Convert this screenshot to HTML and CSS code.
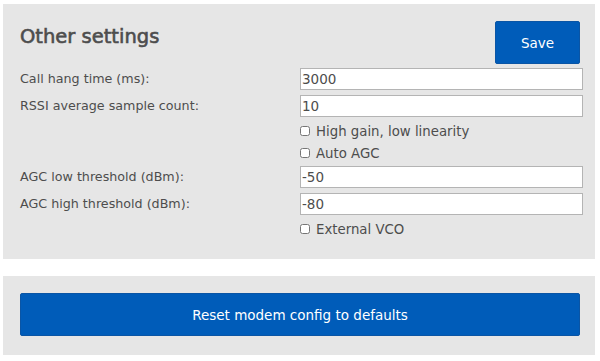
FILE: index.html
```html
<!DOCTYPE html>
<html lang="en">
<head>
    <meta charset="UTF-8">
    <meta name="viewport" content="width=device-width, initial-scale=1.0">
    <title>Other settings</title>
    <link rel="stylesheet" href="styles.css">
</head>
<body>

    <!-- Other settings panel -->
    <div class="panel">
        <div class="panel-head">
            <h2>Other settings</h2>
            <button class="btn save-btn">Save</button>
        </div>

        <div class="settings">
            <label class="field-label" for="hang">Call hang time (ms):</label>
            <input class="field" type="text" id="hang" value="3000">

            <label class="field-label" for="rssi">RSSI average sample count:</label>
            <input class="field" type="text" id="rssi" value="10">

            <span></span>
            <label class="check"><input type="checkbox"> High gain, low linearity</label>

            <span></span>
            <label class="check"><input type="checkbox"> Auto AGC</label>

            <label class="field-label" for="agclow">AGC low threshold (dBm):</label>
            <input class="field" type="text" id="agclow" value="-50">

            <label class="field-label" for="agchigh">AGC high threshold (dBm):</label>
            <input class="field" type="text" id="agchigh" value="-80">

            <span></span>
            <label class="check"><input type="checkbox"> External VCO</label>
        </div>
    </div>

    <!-- Reset panel -->
    <div class="panel reset-panel">
        <button class="btn reset-btn">Reset modem config to defaults</button>
    </div>

</body>
</html>
```

FILE: styles.css
```css
body {
    margin: 0;
    padding: 4px 5px 0 3px;
    font-family: "DejaVu Sans", Verdana, sans-serif;
    font-size: 12.7px;
    color: #4d4d4d;
    background-color: #ffffff;
}

.panel {
    background-color: #e6e6e6;
    padding: 17px 12px 22px 17px;
}

.panel-head {
    display: flex;
    justify-content: space-between;
    align-items: flex-start;
}

.panel-head h2 {
    margin: 4px 0 0 0;
    font-size: 19.5px;
    font-weight: normal;
    -webkit-text-stroke: 0.6px #4d4d4d;
    color: #4d4d4d;
}

.btn {
    background-color: #005cb9;
    color: #ffffff;
    border: 1px solid #0a55a5;
    border-radius: 2px;
    font-family: inherit;
    font-size: 13.5px;
    cursor: pointer;
}

.save-btn {
    width: 85px;
    height: 43px;
    margin-right: 3px;
}

.settings {
    display: grid;
    grid-template-columns: 280px 1fr;
    row-gap: 5px;
    margin-top: 4px;
    align-items: center;
}

.field-label {
    line-height: 22px;
}

.field {
    box-sizing: border-box;
    height: 22px;
    width: 100%;
    margin: 0;
    padding: 0 1px;
    border: 1px solid #b4b4b4;
    background-color: #ffffff;
    font-family: inherit;
    font-size: 13.5px;
    color: #4d4d4d;
}

.check {
    box-sizing: border-box;
    display: flex;
    align-items: center;
    height: 17px;
    padding-top: 1px;
    font-size: 13.3px;
}

.check input {
    width: 10px;
    height: 10px;
    margin: 0 6px 0 0;
}

.reset-panel {
    margin-top: 17px;
    padding: 17px 15px 19px 17px;
}

.reset-btn {
    display: block;
    width: 100%;
    height: 43px;
}
```
